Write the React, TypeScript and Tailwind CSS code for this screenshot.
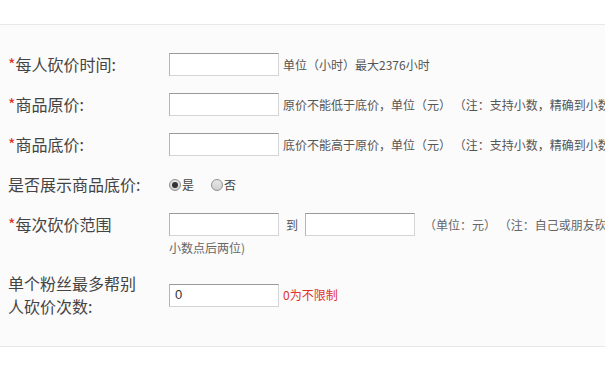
import React from "react";

const Star = () => <span className="text-[#e0322b]">*</span>;

const Input = ({ value }: { value?: string }) => (
  <div className="w-[110px] h-[23px] shrink-0 bg-white border border-[#d4d4d4] border-t-[#9a9a9a] border-l-[#b5b5b5] flex items-center pl-[5px] text-[13px] text-[#333] font-['Liberation_Sans',sans-serif]">
    {value}
  </div>
);

const Radio = ({ checked }: { checked?: boolean }) => (
  <span className="w-[12px] h-[12px] rounded-full border border-[#8f8f8f] bg-gradient-to-b from-[#e8e8e8] to-[#d0d0d0] flex items-center justify-center shrink-0">
    {checked && <span className="w-[6px] h-[6px] rounded-full bg-[#333]" />}
  </span>
);

const labelCls = "w-[169px] pl-[8px] text-[16px] leading-[23px] shrink-0 text-[#444]";

export default function App() {
  return (
    <div className="w-[605px] h-[375px] overflow-hidden bg-white font-['Noto_Sans_CJK_SC',sans-serif] text-[#444]">
      <div className="h-[24px]" />
      <div className="border-t border-b border-[#e8e8e8] bg-[#fbfbfb] pt-[28px] pb-[28px] h-[323px]">
        {/* row 1 */}
        <div className="flex items-center h-[23px]">
          <div className={labelCls}><Star />每人砍价时间:</div>
          <Input />
          <span className="ml-[4px] text-[12px] text-[#555] whitespace-nowrap">单位（小时）最大2376小时</span>
        </div>
        {/* row 2 */}
        <div className="flex items-center h-[23px] mt-[17px]">
          <div className={labelCls}><Star />商品原价:</div>
          <Input />
          <span className="ml-[4px] text-[12px] text-[#555] whitespace-nowrap">原价不能低于底价，单位（元）&nbsp;（注：支持小数，精确到小数点后两位)</span>
        </div>
        {/* row 3 */}
        <div className="flex items-center h-[23px] mt-[17px]">
          <div className={labelCls}><Star />商品底价:</div>
          <Input />
          <span className="ml-[4px] text-[12px] text-[#555] whitespace-nowrap">底价不能高于原价，单位（元）&nbsp;（注：支持小数，精确到小数点后两位)</span>
        </div>
        {/* row 4 */}
        <div className="flex items-center h-[23px] mt-[17px]">
          <div className={labelCls}>是否展示商品底价:</div>
          <div className="flex items-center text-[12px] text-[#444]">
            <Radio checked />
            <span className="ml-[1px]">是</span>
            <span className="ml-[17px]"><Radio /></span>
            <span className="ml-[1px]">否</span>
          </div>
        </div>
        {/* row 5 */}
        <div className="flex items-start mt-[17px]">
          <div className={labelCls}><Star />每次砍价范围</div>
          <div className="flex flex-col">
            <div className="flex items-center h-[23px] whitespace-nowrap">
              <Input />
              <span className="ml-[7px] mr-[7px] text-[12px] text-[#555]">到</span>
              <Input />
              <span className="ml-[9px] text-[12px] text-[#666]">（单位：元）&nbsp;（注：自己或朋友砍下的价格区间，支持小数，精确到</span>
            </div>
            <div className="mt-[4px] text-[12px] leading-[16px] text-[#666]">小数点后两位)</div>
          </div>
        </div>
        {/* row 6 */}
        <div className="flex items-center mt-[16px]">
          <div className={labelCls}>
            <div>单个粉丝最多帮别</div>
            <div>人砍价次数:</div>
          </div>
          <Input value="0" />
          <span className="ml-[4px] text-[12px] text-[#e0322b] whitespace-nowrap">0为不限制</span>
        </div>
      </div>
    </div>
  );
}
